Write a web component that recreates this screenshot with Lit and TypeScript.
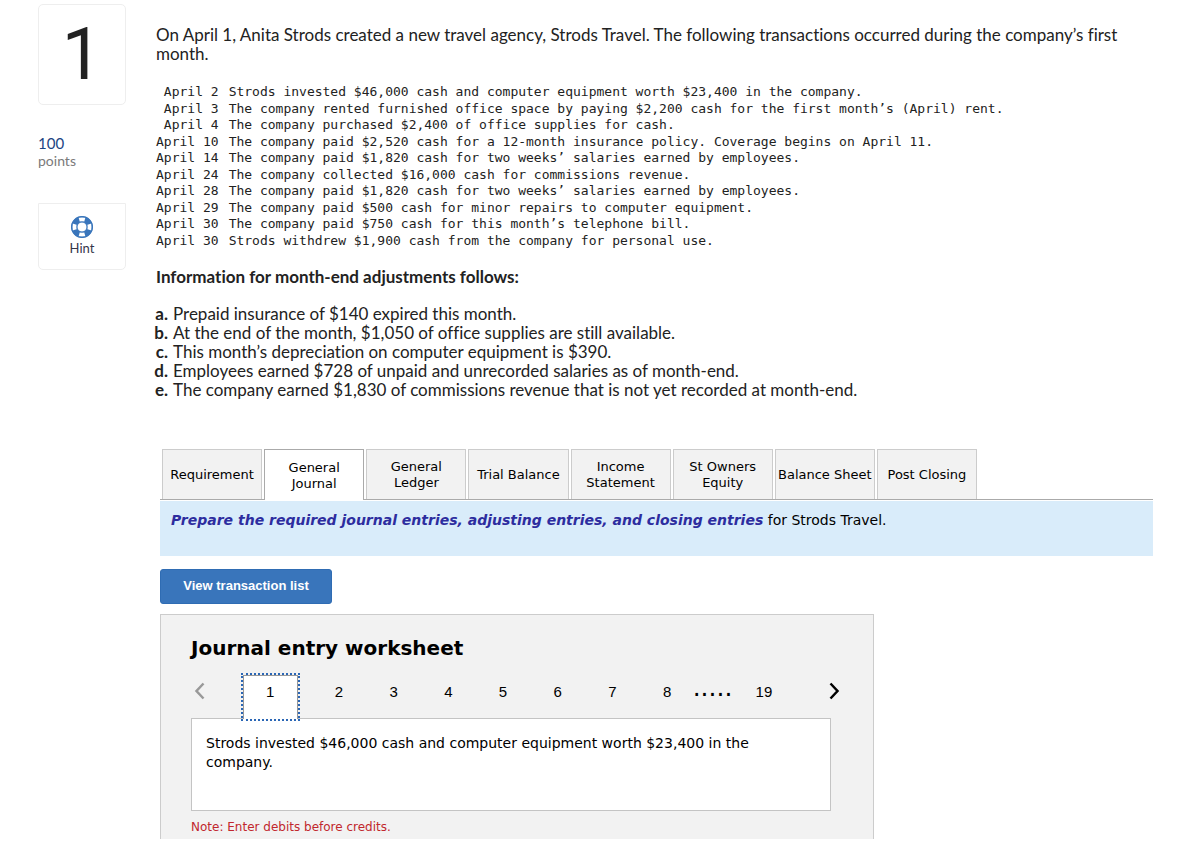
import { LitElement, html, css, svg } from "lit";
import { customElement, state } from "lit/decorators.js";
import { classMap } from "lit/directives/class-map.js";

const TRANSACTIONS: [string, string][] = [
  ["April 2", "Strods invested $46,000 cash and computer equipment worth $23,400 in the company."],
  ["April 3", "The company rented furnished office space by paying $2,200 cash for the first month’s (April) rent."],
  ["April 4", "The company purchased $2,400 of office supplies for cash."],
  ["April 10", "The company paid $2,520 cash for a 12-month insurance policy. Coverage begins on April 11."],
  ["April 14", "The company paid $1,820 cash for two weeks’ salaries earned by employees."],
  ["April 24", "The company collected $16,000 cash for commissions revenue."],
  ["April 28", "The company paid $1,820 cash for two weeks’ salaries earned by employees."],
  ["April 29", "The company paid $500 cash for minor repairs to computer equipment."],
  ["April 30", "The company paid $750 cash for this month’s telephone bill."],
  ["April 30", "Strods withdrew $1,900 cash from the company for personal use."],
];

const ADJUSTMENTS: [string, string][] = [
  ["a.", "Prepaid insurance of $140 expired this month."],
  ["b.", "At the end of the month, $1,050 of office supplies are still available."],
  ["c.", "This month’s depreciation on computer equipment is $390."],
  ["d.", "Employees earned $728 of unpaid and unrecorded salaries as of month-end."],
  ["e.", "The company earned $1,830 of commissions revenue that is not yet recorded at month-end."],
];

const TABS = [
  "Requirement",
  "General Journal",
  "General Ledger",
  "Trial Balance",
  "Income Statement",
  "St Owners Equity",
  "Balance Sheet",
  "Post Closing",
];

@customElement("question-sidebar")
class QuestionSidebar extends LitElement {
  static styles = css`
    :host {
      display: block;
      font-family: Lato, sans-serif;
    }
    .number {
      display: flex;
      align-items: center;
      justify-content: center;
      box-sizing: border-box;
      height: 101px;
      border: 1px solid #eee;
      border-radius: 5px;
      color: #222;
      font: 400 72px/1 Roboto, sans-serif;
    }
    .points {
      margin: 29px 0 33px;
      color: #7a7a7a;
      font-size: 14px;
      line-height: 18px;
    }
    .score {
      display: block;
      color: #1c4583;
      font-size: 15px;
    }
    .hint {
      display: flex;
      flex-direction: column;
      align-items: center;
      gap: 2px;
      box-sizing: border-box;
      width: 100%;
      height: 67px;
      padding: 12px 0 0;
      border: 1px solid #eee;
      border-radius: 0 0 5px 5px;
      background: #fff;
      color: #35354a;
      font: 13px/16px Lato, sans-serif;
    }
  `;

  render() {
    return html`
      <div class="number">1</div>
      <div class="points"><span class="score">100</span>points</div>
      <button class="hint">
        <svg width="22" height="22" viewBox="0 0 22 22" aria-hidden="true">
          <circle cx="11" cy="11" r="8" fill="none" stroke="#3975bb" stroke-width="6" />
          ${[0, 90, 180, 270].map(
            (a) => svg`<path transform="rotate(${a} 11 11)" d="M7.600 1.500h6.800L13.300 5.600h-4.600z" fill="#fff" />`
          )}
          <circle cx="11" cy="11" r="10.4" fill="none" stroke="#3975bb" stroke-width="1" />
          <circle cx="11" cy="11" r="5" fill="none" stroke="#3975bb" stroke-width="1" />
        </svg>
        Hint
      </button>
    `;
  }
}

@customElement("journal-worksheet")
class JournalWorksheet extends LitElement {
  @state() private page = 1;

  static styles = css`
    :host {
      display: block;
      box-sizing: border-box;
      max-width: 714px;
      padding: 21px 30px 4px;
      border: 1px solid #ccc;
      border-bottom: 0;
      background: #f2f2f2;
      color: #000;
      font-family: "DejaVu Sans", sans-serif;
    }
    h2 {
      margin: 0 0 15px;
      font-size: 20px;
      line-height: 24px;
    }
    button {
      padding: 0;
      border: 0;
      background: none;
      color: #000;
      font: 15px/18px "Liberation Sans", sans-serif;
    }
    .pager {
      display: flex;
      height: 43px;
    }
    .step {
      display: flex;
      align-items: center;
      width: 52px;
      padding: 0 3px 12px;
    }
    .next {
      justify-content: flex-end;
    }
    .page {
      width: 55px;
      padding-bottom: 9px;
    }
    .page.active {
      margin: 0 14px -1px 0;
      padding-bottom: 11px;
      border: 1px solid #999;
      border-bottom: 0;
      background: #fff;
      outline: 2px dotted #2a66b5;
      z-index: 1;
    }
    .dots {
      display: flex;
      justify-content: center;
      width: 36px;
      margin-right: 6px;
      font-size: 25px;
      line-height: 26px;
    }
    .entry {
      max-width: 608px;
      min-height: 61px;
      padding: 15px 16px 15px 14px;
      border: 1px solid #c4c4c4;
      background: #fff;
      font-size: 14px;
      line-height: 19px;
    }
    .entry p {
      max-width: 570px;
      margin: 0;
    }
    .note {
      margin: 8px 0 0;
      color: #c1272d;
      font-size: 12px;
      line-height: 16px;
    }
  `;

  private pageButton(n: number) {
    return html`<button
      class=${classMap({ page: true, active: this.page === n })}
      @click=${() => (this.page = n)}
    >${n}</button>`;
  }

  render() {
    return html`
      <h2>Journal entry worksheet</h2>
      <nav class="pager" aria-label="Journal entries">
        <button class="step" aria-label="Previous entry">
          <svg width="12" height="18" viewBox="0 0 12 18" fill="none" stroke="#999" stroke-width="2.500">
            <path d="M9.500 1.500 2.500 9l7 7.500" />
          </svg>
        </button>
        ${[1, 2, 3, 4, 5, 6, 7, 8].map((n) => this.pageButton(n))}
        <span class="dots">.....</span>
        ${this.pageButton(19)}
        <button class="step next" aria-label="Next entry">
          <svg width="12" height="18" viewBox="0 0 12 18" fill="none" stroke="#000" stroke-width="2.500">
            <path d="M2.500 1.500 9.500 9l-7 7.500" />
          </svg>
        </button>
      </nav>
      <div class="entry">
        <p>Strods invested $46,000 cash and computer equipment worth $23,400 in the company.</p>
      </div>
      <p class="note">Note: Enter debits before credits.</p>
    `;
  }
}

@customElement("app-root")
class AppRoot extends LitElement {
  @state() private tab = 1;

  static styles = css`
    :host {
      display: grid;
      grid-template-columns: 88px minmax(0, 1fr);
      column-gap: 30px;
      padding: 4px 47px 7px 38px;
      background: #fff;
      color: #222;
      font: 17px/19px Lato, sans-serif;
      font-variant-ligatures: none;
    }
    main {
      padding-top: 21px;
    }
    .intro {
      margin: 0 0 21px;
    }
    .transactions {
      height: 165px;
      border-collapse: collapse;
      font: 13px/16px "DejaVu Sans Mono", monospace;
      white-space: nowrap;
    }
    .transactions th {
      padding: 0 10px 0 0;
      font-weight: 400;
      text-align: right;
    }
    .transactions td {
      padding: 0;
    }
    h1 {
      margin: 18px 0;
      font-size: 17px;
      line-height: 19px;
    }
    .adjustments {
      display: flex;
      flex-direction: column;
      margin: 0 0 50px;
      padding: 0;
      list-style: none;
    }
    .adjustments li {
      display: grid;
      grid-template-columns: 12px 1fr;
      column-gap: 5px;
    }
    .adjustments b {
      justify-self: end;
    }
    .work {
      margin-left: 4px;
      font-family: "DejaVu Sans", sans-serif;
      color: #000;
    }
    .tabs {
      border-bottom: 1px solid #aaa;
      padding-left: 2px;
    }
    .strip {
      display: flex;
      gap: 2px;
      max-width: 815px;
      height: 50px;
    }
    .tab {
      flex: 1 1 0;
      min-width: 0;
      padding: 1px 0 0;
      border: 1px solid #ccc;
      border-bottom: 0;
      background: #f2f2f2;
      color: #000;
      font: 13px/16px "DejaVu Sans", sans-serif;
    }
    .tab span {
      display: block;
      max-width: 80px;
      margin: 0 auto;
    }
    .tab .one-line {
      max-width: none;
      white-space: nowrap;
    }
    .tab.active {
      margin-bottom: -1px;
      border-color: #aaa;
      background: #fff;
    }
    .prompt {
      margin: 1px 0 13px;
      padding: 10px 11px 26px;
      background: #d9ecfa;
      font-size: 14px;
      line-height: 19px;
    }
    .prompt em {
      color: #2d2d9f;
      font-weight: 700;
    }
    .view {
      display: block;
      width: 172px;
      height: 35px;
      margin-bottom: 10px;
      padding: 0 0 2px;
      border: 1px solid #2f6cb3;
      border-radius: 3px;
      background: #3975bb;
      color: #fff;
      font: 700 13px/16px "Liberation Sans", sans-serif;
    }
  `;

  render() {
    return html`
      <question-sidebar></question-sidebar>
      <main>
        <p class="intro">
          On April 1, Anita Strods created a new travel agency, Strods Travel. The following transactions occurred
          during the company’s first month.
        </p>
        <table class="transactions">
          <tbody>
            ${TRANSACTIONS.map(
              ([date, text]) => html`<tr><th scope="row">${date}</th><td>${text}</td></tr>`
            )}
          </tbody>
        </table>
        <h1>Information for month-end adjustments follows:</h1>
        <ul class="adjustments">
          ${ADJUSTMENTS.map(([mark, text]) => html`<li><b>${mark}</b><span>${text}</span></li>`)}
        </ul>
        <section class="work">
          <div class="tabs">
            <div class="strip" role="tablist">
              ${TABS.map(
                (name, i) => html`<button
                  role="tab"
                  aria-selected=${this.tab === i}
                  class=${classMap({ tab: true, active: this.tab === i })}
                  @click=${() => (this.tab = i)}
                ><span class=${classMap({ "one-line": [0, 3, 6, 7].includes(i) })}>${name}</span></button>`
              )}
            </div>
          </div>
          <p class="prompt">
            <em>Prepare the required journal entries, adjusting entries, and closing entries</em> for Strods Travel.
          </p>
          <button class="view">View transaction list</button>
          <journal-worksheet></journal-worksheet>
        </section>
      </main>
    `;
  }
}
